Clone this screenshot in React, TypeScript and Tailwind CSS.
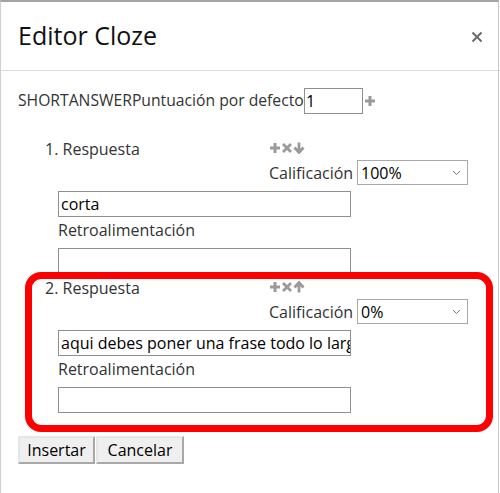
import React from "react";

const font = { fontFamily: '"Open Sans", "Noto Sans", sans-serif' };

function Plus({ className = "" }: { className?: string }) {
  return (
    <svg width="12" height="12" viewBox="0 0 12 12" className={className}>
      <path d="M6 1 V11 M1 6 H11" stroke="#9a9a9a" strokeWidth="3" />
    </svg>
  );
}
function Cross() {
  return (
    <svg width="12" height="12" viewBox="0 0 12 12">
      <path d="M2 2 L10 10 M10 2 L2 10" stroke="#9a9a9a" strokeWidth="2.8" />
    </svg>
  );
}
function Arrow({ up }: { up?: boolean }) {
  return (
    <svg width="12" height="12" viewBox="0 0 12 12" style={{ transform: up ? "rotate(180deg)" : undefined }}>
      <path d="M6 0.5 V10 M1.5 5.5 L6 10.5 L10.5 5.5" stroke="#9a9a9a" strokeWidth="2.8" fill="none" />
    </svg>
  );
}

function Select({ value }: { value: string }) {
  return (
    <div className="flex h-[25px] w-[111px] items-center justify-between border border-[#a9a9a9] bg-white pl-[3px] pr-[6px] text-[16px] text-black">
      <span>{value}</span>
      <svg width="9" height="6" viewBox="0 0 9 6">
        <path d="M1 1 L4.5 4.5 L8 1" stroke="#777" strokeWidth="1" fill="none" />
      </svg>
    </div>
  );
}

function TextBox({ value }: { value?: string }) {
  return (
    <div className="h-[26px] w-[293px] overflow-hidden whitespace-nowrap border border-[#8f8f8f] bg-white pl-[2px] text-[16px] leading-[24px] text-black">
      {value}
    </div>
  );
}

function Answer({ n, up, grade, answer }: { n: number; up?: boolean; grade: string; answer: string }) {
  return (
    <div className="flex flex-col">
      <div className="flex">
        <div className="ml-[27px] w-[224px] text-[16px] leading-[20px] text-[#333]">{n}. Respuesta</div>
        <div className="flex flex-col">
          <div className="flex h-[18px] items-center">
            <Plus />
            <Cross />
            <Arrow up={up} />
          </div>
          <div className="mt-[3px] flex items-center">
            <span className="w-[88px] whitespace-nowrap text-[16px] text-[#333]">Calificación</span>
            <Select value={grade} />
          </div>
        </div>
      </div>
      <div className="ml-[40px] mt-[6px]">
        <TextBox value={answer} />
      </div>
      <div className="ml-[40px] mt-[3px] h-[20px] text-[16px] leading-[20px] text-[#333]">Retroalimentación</div>
      <div className="ml-[40px] mt-[8px]">
        <TextBox />
      </div>
    </div>
  );
}

export default function App() {
  return (
    <div style={font} className="relative h-[493px] w-[500px] overflow-hidden bg-white">
      <div className="absolute inset-0 right-[1px] border-l border-t-2 border-r border-l-[#cfcfcf] border-t-[#a3a3a3] border-r-[#c8c8c8]" />
      <div className="flex h-[71px] items-center justify-between border-b border-[#dedede] pl-[18px] pr-[17px] pt-[2px]">
        <span className="text-[25px] text-[#111]">Editor Cloze</span>
        <svg width="12" height="12" viewBox="0 0 12 12" className="mt-[2px]">
          <path d="M1.5 1.5 L10.5 10.5 M10.5 1.5 L1.5 10.5" stroke="#6b6b6b" strokeWidth="2" />
        </svg>
      </div>
      <div className="flex flex-col pl-[18px]">
        <div className="mt-[17px] flex items-center">
          <span className="w-[286px] whitespace-nowrap text-[15.7px] text-[#333]">SHORTANSWERPuntuación por defecto</span>
          <div className="h-[26px] w-[59px] border border-[#8f8f8f] pl-[1px] text-[16px] leading-[24px] text-black">1</div>
          <Plus className="ml-[1px]" />
        </div>
        <div className="mt-[25px]">
          <Answer n={1} grade="100%" answer="corta" />
        </div>
        <div className="mt-[4px]">
          <Answer n={2} up grade="0%" answer="aqui debes poner una frase todo lo largo" />
        </div>
        <div className="mt-[23px] flex">
          <button className="h-[28px] w-[77px] border-2 border-t-[#e6e6e6] border-l-[#e6e6e6] border-b-[#a8a8a8] border-r-[#a8a8a8] bg-[#efefef] text-[16px] text-black">Insertar</button>
          <button className="ml-[1px] h-[28px] w-[88px] border-2 border-t-[#e6e6e6] border-l-[#e6e6e6] border-b-[#a8a8a8] border-r-[#a8a8a8] bg-[#efefef] text-[16px] text-black">Cancelar</button>
        </div>
      </div>
      <div className="pointer-events-none absolute left-[25px] top-[272px] h-[160px] w-[468px] rounded-[16px] border-[7px] border-[#ff0000]" />
    </div>
  );
}
